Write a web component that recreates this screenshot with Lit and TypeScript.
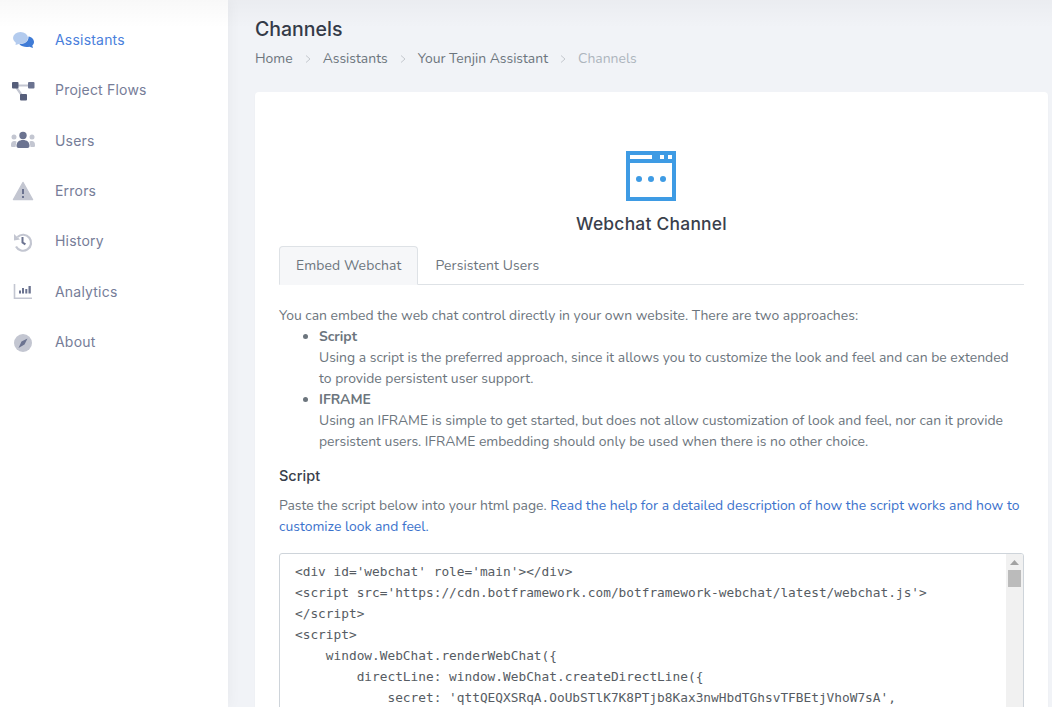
import { LitElement, html, css, svg } from "lit";
import { customElement } from "lit/decorators.js";

const C1 = "#c3c6d1", C2 = "#6b7390";
const icons: Record<string, any> = {
  chat: svg`<ellipse cx="9.500" cy="10" rx="7.500" ry="6" fill="#b3cbee"/><path d="M5 14l-.5 3 5-1.500z" fill="#b3cbee"/><path d="M17.500 8.500c3.500 .5 5.500 3 5.500 5.500 0 1.500-.7 2.700-1.700 3.500l.7 2.500-3.700-1.300c-3 .7-7.500 .3-10-2.700 5 .5 9.500-2.500 9.200-7.500z" fill="#3f7bd6"/>`,
  flow: svg`<path d="M4 7.500H20M4 7.500L12 19" stroke="${C1}" stroke-width="2.200" fill="none"/><rect x="1" y="4" width="6.500" height="6.500" rx="1" fill="#565e7a"/><rect x="17" y="4" width="6.500" height="6.500" rx="1" fill="#6b7390"/><rect x="9" y="16" width="7" height="6.500" rx="1" fill="#565e7a"/>`,
  users: svg`<circle cx="3" cy="9" r="2.500" fill="${C1}"/><circle cx="21" cy="9" r="2.500" fill="${C1}"/><path d="M1 19c-1 0-1-1-1-2 0-3 1.500-4 3-4s2.500 .5 2.500 .5L4.500 19zM23 19c1 0 1-1 1-2 0-3-1.500-4-3-4s-2.500 .5-2.500 .5l1 5.500z" fill="${C1}"/><circle cx="12" cy="7.500" r="3.700" fill="${C2}"/><path d="M5.500 18c0-4 2.500-6 6.500-6s6.500 2 6.500 6c0 1.300-1 2-2 2h-9c-1 0-2-.7-2-2z" fill="${C2}"/>`,
  error: svg`<path d="M12 3.500l9.500 17H2.500z" fill="${C1}" stroke="${C1}" stroke-width="1.500" stroke-linejoin="round"/><rect x="11" y="10" width="2" height="5" fill="${C2}"/><rect x="11" y="17" width="2" height="2" fill="${C2}"/>`,
  history: svg`<path d="M6.500 8a8 8 0 1 1-1.500 9.500" fill="none" stroke="${C1}" stroke-width="2.200"/><path d="M3 5l6 5.500-6 1z" fill="${C1}"/><path d="M10.500 8h2v5l2.500 1.500-1.200 1.700-3.300-2.200z" fill="${C2}"/>`,
  chart: svg`<path d="M3.500 5v14.300H21" fill="none" stroke="${C1}" stroke-width="1.600"/><rect x="8" y="11.500" width="2" height="3" fill="${C2}"/><rect x="11" y="9" width="2" height="5.500" fill="${C2}"/><rect x="14.300" y="10" width="2" height="4.500" fill="${C2}"/><rect x="17.500" y="7" width="2.300" height="7.500" fill="${C2}"/>`,
  compass: svg`<circle cx="12" cy="13" r="9" fill="${C1}"/><path d="M16.500 8.500l-3 6-6 3.500 3-6.500z" fill="${C2}"/>`,
};

const NAV = [
  ["chat", "Assistants", true],
  ["flow", "Project Flows"],
  ["users", "Users"],
  ["error", "Errors"],
  ["history", "History"],
  ["chart", "Analytics"],
  ["compass", "About"],
] as const;

const CODE = `<div id='webchat' role='main'></div>
<script src='https://cdn.botframework.com/botframework-webchat/latest/webchat.js'>
</script>
<script>
    window.WebChat.renderWebChat({
        directLine: window.WebChat.createDirectLine({
            secret: 'qttQEQXSRqA.OoUbSTlK7K8PTjb8Kax3nwHbdTGhsvTFBEtjVhoW7sA',`;

@customElement("app-root")
export class AppRoot extends LitElement {
  static styles = css`
    :host { display: block; height: 707px; overflow: hidden; background: #f1f3f7; font-family: "Nunito", "Noto Sans", sans-serif; color: #6c757d; font-size: 13.930px; line-height: 21px; }
    .shell { display: flex; height: 707px; overflow: hidden; position: relative; }
    .shade { position: absolute; left: 0; right: 0; top: 0; height: 28px; background: linear-gradient(#00000007, #00000000); pointer-events: none; }
    aside { width: 228px; flex: none; background: #fff; padding-top: 14.500px; box-sizing: border-box; box-shadow: 0 0 14px #0000000d; position: relative; }
    .nav { display: flex; align-items: center; height: 50.330px; padding-left: 11px; font-family: "Inter", sans-serif; font-size: 14px; color: #767d98; letter-spacing: 0.2px; }
    .nav svg { width: 24px; height: 24px; margin-right: 20px; flex: none; }
    .nav.on { color: #4a80dc; }
    main { flex: 1; min-width: 0; padding: 18px 4px 0 27px; }
    h1 { margin: 0; font: 500 19.500px/22px "Inter", sans-serif; color: #343a48; }
    .crumbs { display: flex; align-items: center; margin-top: 8px; height: 21px; color: #6c757d; }
    .crumbs i { font-style: normal; width: 30px; display: flex; justify-content: center; }
    .crumbs i svg { width: 6px; height: 8px; }
    .crumbs .last { color: #adb5bd; }
    .card { margin-top: 23px; background: #fff; border-radius: 4px; padding: 24px 24px 0; height: 640px; box-sizing: border-box; box-shadow: 0 1px 2px #0000000a; }
    .head { display: flex; flex-direction: column; align-items: center; padding-top: 36px; margin-left: -2px; }
    .head svg { width: 50px; height: 50px; margin-top: -1px; }
    h2 { margin: 11px 0 0 2px; font: 500 17.400px/24px "Inter", sans-serif; letter-spacing: 0.25px; color: #3a3f4c; }
    .tabs { display: flex; margin-top: 10px; border-bottom: 1px solid #dee2e6; height: 38px; letter-spacing: 0.12px; }
    .tab { padding: 0 16px; line-height: 38px; border: 1px solid transparent; border-radius: 4px 4px 0 0; color: #6c757d; }
    .tab.on { background: #f6f7f9; border-color: #dee2e6 #dee2e6 transparent; height: 39px; box-sizing: border-box; }
    .intro { margin: 20px 0 0; }
    ul { margin: 0; padding-left: 40px; }
    li b { font-weight: 700; display: block; }
    h3 { margin: 13px 0 0; font: 500 14.500px/21px "Inter", sans-serif; color: #3a3f4c; }
    .para { margin: 9px 0 0; }
    a { color: #3b72cc; text-decoration: none; }
    .box { margin-top: 16px; border: 1px solid #ced4da; border-radius: 3px; height: 300px; display: flex; box-sizing: border-box; overflow: hidden; background: #fff; }
    pre { flex: 1; margin: 0; padding: 7px 15px; font: 12.800px/21px "DejaVu Sans Mono", monospace; color: #565c63; overflow: hidden; }
    .sb { width: 17px; background: #f1f1f1; flex: none; display: flex; flex-direction: column; align-items: center; }
    .sb svg { width: 9px; height: 5px; margin-top: 6px; }
    .thumb { width: 13px; height: 17px; background: #bbb; margin-top: 5px; }
  `;
  render() {
    const chev = svg`<path d="M1 .5L5 4 1 7.500" fill="none" stroke="#c4c8ce" stroke-width="1"/>`;
    const sep = html`<i><svg viewBox="0 0 6 8">${chev}</svg></i>`;
    return html`<div class="shell">
      <aside>
        ${NAV.map(n => html`<div class="nav ${n[2] ? "on" : ""}"><svg viewBox="0 0 24 24">${icons[n[0]]}</svg>${n[1]}</div>`)}
      </aside>
      <main>
        <h1>Channels</h1>
        <div class="crumbs"><span>Home</span>${sep}<span>Assistants</span>${sep}<span>Your Tenjin Assistant</span>${sep}<span class="last">Channels</span></div>
        <div class="card">
          <div class="head">
            <svg viewBox="0 0 50 50">
              <rect width="50" height="50" fill="#3e9be4"/>
              <path d="M4 4h22v4H4zM34 4h4v4h-4zM42 4h4v4h-4z" fill="#fff"/>
              <rect x="4" y="12" width="42" height="34" fill="#fff"/>
              <circle cx="13" cy="28" r="3" fill="#3e9be4"/><circle cx="25" cy="28" r="3" fill="#3e9be4"/><circle cx="37" cy="28" r="3" fill="#3e9be4"/>
            </svg>
            <h2>Webchat Channel</h2>
          </div>
          <div class="tabs"><div class="tab on">Embed Webchat</div><div class="tab">Persistent Users</div></div>
          <div class="intro">You can embed the web chat control directly in your own website. There are two approaches:</div>
          <ul>
            <li><b>Script</b>Using a script is the preferred approach, since it allows you to customize the look and feel and can be extended to provide persistent user support.</li>
            <li><b>IFRAME</b>Using an IFRAME is simple to get started, but does not allow customization of look and feel, nor can it provide persistent users. IFRAME embedding should only be used when there is no other choice.</li>
          </ul>
          <h3>Script</h3>
          <p class="para">Paste the script below into your html page. <a>Read the help for a detailed description of how the script works and how to customize look and feel.</a></p>
          <div class="box"><pre>${CODE}</pre><div class="sb"><svg viewBox="0 0 9 5"><path d="M4.500 0L9 5H0z" fill="#a3a3a3"/></svg><div class="thumb"></div></div></div>
        </div>
      </main>
      <div class="shade"></div>
    </div>`;
  }
}
